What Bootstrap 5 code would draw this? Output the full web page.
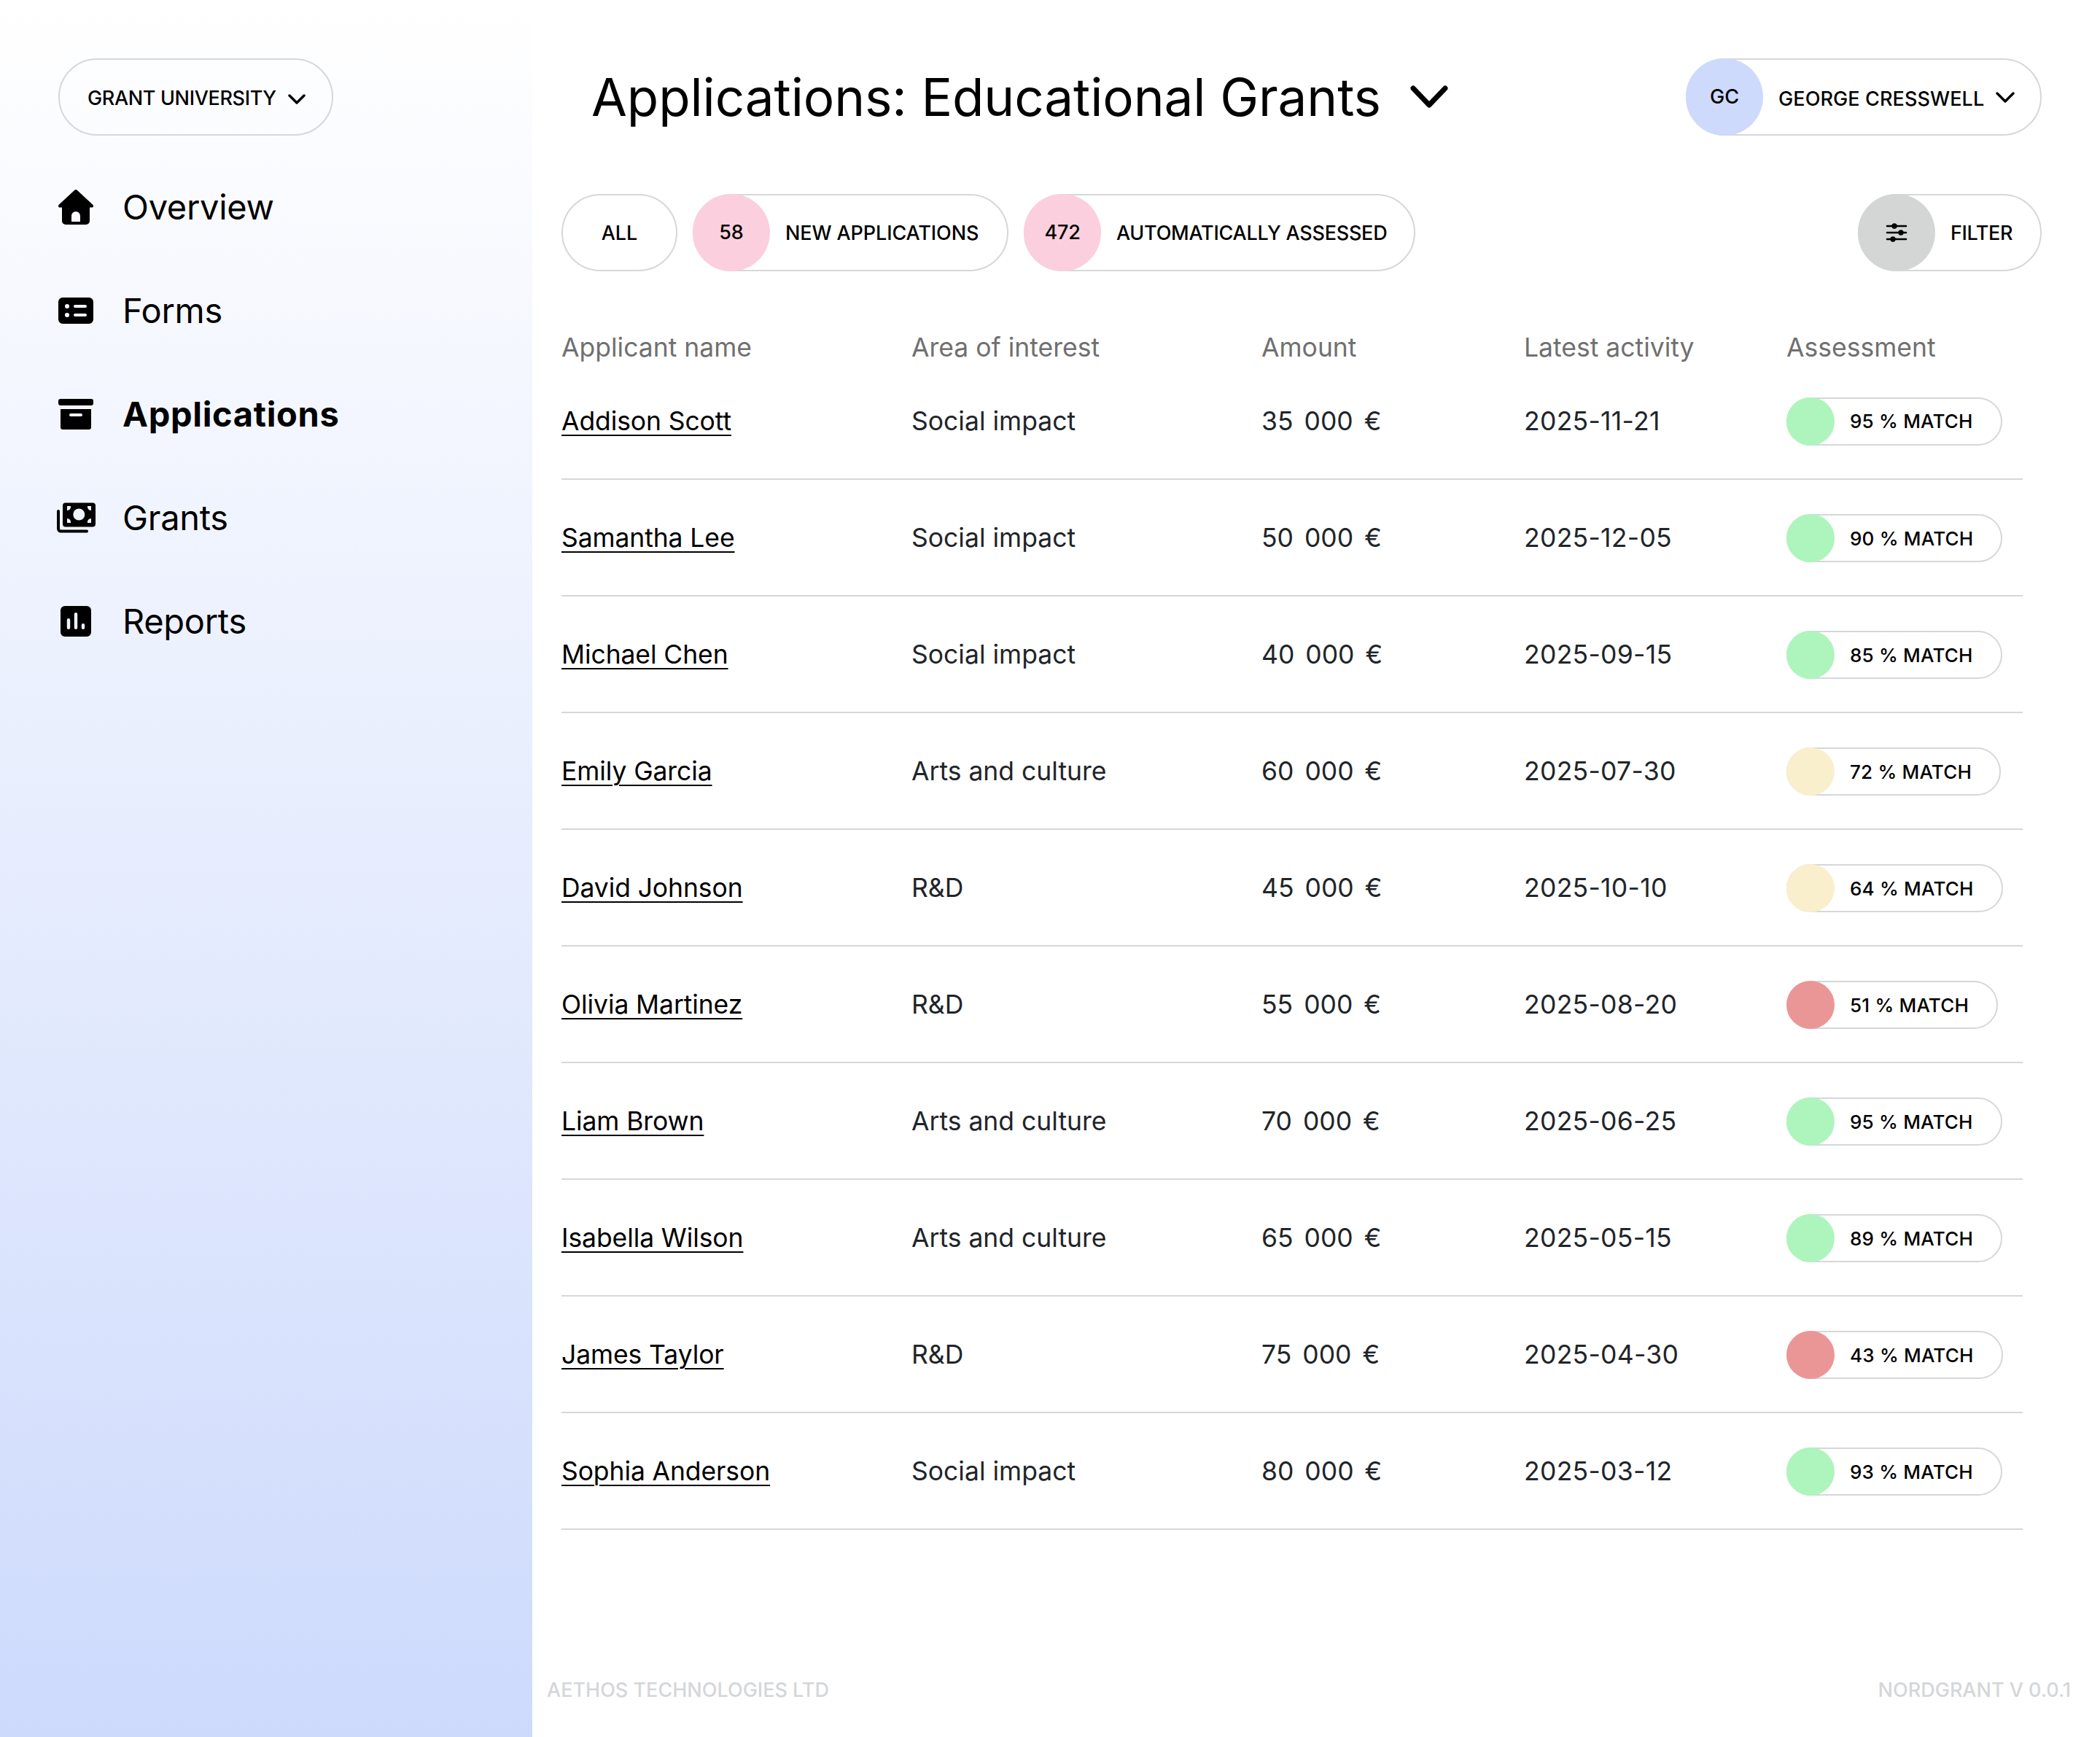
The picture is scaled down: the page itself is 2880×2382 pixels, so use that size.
<!doctype html>
<html lang="en">
<head>
<meta charset="utf-8">
<title>Applications: Educational Grants</title>
<link href="https://cdn.jsdelivr.net/npm/bootstrap@5.3.0/dist/css/bootstrap.min.css" rel="stylesheet">
<style>
html,body{height:100%}
body{font-family:Inter,"Noto Sans",sans-serif;color:#000;background:#fff;font-size:35.5px;min-height:2382px}
.shell{min-height:2382px}
.side{width:730px;flex:none;background:linear-gradient(180deg,#fff 0,#cddafc 100%);padding:80px 0 0 76px}
.main-area{min-width:0}
.chip{height:106px;border:2px solid #d5d7db;background:#fff;font-size:27px;font-weight:500;white-space:nowrap;color:#000;letter-spacing:-.1px}
.chip-dot{width:106px;height:106px;margin:-2px 0 -2px -2px;flex:none}
.chip-org{margin-left:4px;width:377px;padding-left:38px;padding-top:5px;background:transparent;letter-spacing:-.35px}
.nav-wrap{margin-top:27px}
.side .nav-link{height:142px;padding:0;color:#000;font-size:47px;display:flex;align-items:center;gap:36px;letter-spacing:-.3px}
.side .nav-link.active{font-weight:700;letter-spacing:.65px}
.top-bar{padding:80px 80px 0 81px}
.page-title{font-size:71px;font-weight:400;margin:0;letter-spacing:-.13px;line-height:106px}
.title-caret{margin-left:39px}
.filter-bar{padding:80px 80px 0 40px;gap:21px}
.chip-all{width:159px}
.chip-new{width:433px}
.chip-auto{width:537px;letter-spacing:-.25px}
.chip-filter{width:252px;letter-spacing:-.4px}
.chip-user{width:488px;letter-spacing:.1px}
.lbl,.dot-txt{padding-top:3px}
.chip-user .lbl{padding-top:6px}
.dot-pink{background:#fccfde}
.dot-blue{background:#cddafc}
.dot-gray{background:#d4d6d6}
.lbl{margin-left:21px}
.tbl-wrap{padding:81px 106px 0 40px}
.apps{table-layout:fixed;width:100%;margin:0;--bs-table-bg:transparent;font-size:35.5px}
.apps th{font-weight:400;color:#707070;padding:4px 0 0;height:44px;line-height:40px;border:0}
.apps td{padding:2px 0 0;height:160px;border-bottom:2px solid #d5d7db;vertical-align:middle}
.w-a{width:480px}.w-b{width:360px}
.apps a{color:#000;text-underline-offset:6px;text-decoration-thickness:2px;letter-spacing:-.1px}
.amt{word-spacing:5px}
.act{letter-spacing:.3px}
.match{height:66px;font-size:26px;letter-spacing:.2px;width:fit-content}
.match .chip-dot{width:66px;height:66px}
.hi{background:#adf5bc}.mid{background:#faefcc}.lo{background:#eb9696}
.m-lbl{margin:0 38px 0 21px}
.foot{padding:0 40px 47px 20px;color:#d4d6d9;font-size:27px;font-weight:500;line-height:34px}
</style>
</head>
<body>
<div class="shell d-flex">
  <aside class="side">
    <div class="chip chip-org rounded-pill d-inline-flex align-items-center gap-3">GRANT UNIVERSITY
      <svg width="24" height="14" viewBox="0 0 24 14" fill="none" stroke="#000" stroke-width="3.4" stroke-linecap="round" stroke-linejoin="round"><path d="M2 2l10 10L22 2"/></svg>
    </div>
    <nav class="nav flex-column nav-wrap">
      <a class="nav-link" href="#"><svg width="56" height="56" viewBox="0 0 56 56"><path fill-rule="evenodd" d="M26 5a3 3 0 0 1 4 0l21 19.500c2 2 1 4-1.500 4H47V47a5 5 0 0 1-5 5H14a5 5 0 0 1-5-5V28.500H6.500c-2.500 0-3.500-2-1.500-4zM22 48h12v-8a6 6 0 0 0-12 0z"/></svg>Overview</a>
      <a class="nav-link" href="#"><svg width="56" height="56" viewBox="0 0 56 56"><path fill-rule="evenodd" d="M10 10h36a6 6 0 0 1 6 6v24a6 6 0 0 1-6 6H10a6 6 0 0 1-6-6V16a6 6 0 0 1 6-6zM16 19a3 3 0 1 0 0 6 3 3 0 0 0 0-6zM16 31a3 3 0 1 0 0 6 3 3 0 0 0 0-6zM27 20a2 2 0 0 0 0 4h14a2 2 0 0 0 0-4zM27 32a2 2 0 0 0 0 4h14a2 2 0 0 0 0-4z"/></svg>Forms</a>
      <a class="nav-link active" href="#"><svg width="56" height="56" viewBox="0 0 56 56"><rect x="4" y="7" width="48" height="9" rx="3"/><path fill-rule="evenodd" d="M7 21h42v25a3 3 0 0 1-3 3H10a3 3 0 0 1-3-3zM21 27a2 2 0 0 0 0 4h14a2 2 0 0 0 0-4z"/></svg>Applications</a>
      <a class="nav-link" href="#"><svg width="56" height="56" viewBox="0 0 56 56"><path fill-rule="evenodd" d="M14 7.500h37a4 4 0 0 1 4 4v25a4 4 0 0 1-4 4H14a4 4 0 0 1-4-4v-25a4 4 0 0 1 4-4zM32.300 15.500a8 8 0 1 0 0 16 8 8 0 0 0 0-16zM16 12v6a5 5 0 0 0 5-6zM49 12h-5a5 5 0 0 0 5 6zM16 29v6h5a5 5 0 0 0-5-6zM49 29a5 5 0 0 0-5 6h5z"/><path fill="none" stroke="#000" stroke-width="4" stroke-linecap="round" d="M4 19v24a3.500 3.500 0 0 0 3.500 3.500H43"/></svg>Grants</a>
      <a class="nav-link" href="#"><svg width="56" height="56" viewBox="0 0 56 56"><path fill-rule="evenodd" d="M13 7h30a6 6 0 0 1 6 6v30a6 6 0 0 1-6 6H13a6 6 0 0 1-6-6V13a6 6 0 0 1 6-6zM18 24a2.200 2.200 0 0 0-2.200 2.200v10.600a2.200 2.200 0 0 0 4.400 0V26.200A2.200 2.200 0 0 0 18 24zM28 16a2.200 2.200 0 0 0-2.200 2.200v18.600a2.200 2.200 0 0 0 4.400 0V18.200A2.200 2.200 0 0 0 28 16zM38 31a2.200 2.200 0 0 0-2.200 2.200v3.600a2.200 2.200 0 0 0 4.400 0v-3.600A2.200 2.200 0 0 0 38 31z"/></svg>Reports</a>
    </nav>
  </aside>
  <main class="main-area flex-grow-1 d-flex flex-column">
    <header class="top-bar d-flex align-items-center justify-content-between">
      <div class="d-flex align-items-center">
        <h1 class="page-title">Applications: Educational Grants</h1>
        <svg class="title-caret" width="54" height="32" viewBox="0 0 54 32" fill="none" stroke="#000" stroke-width="7" stroke-linecap="round" stroke-linejoin="round"><path d="M5 4l22 23L49 4"/></svg>
      </div>
      <div class="chip chip-user rounded-pill d-flex align-items-center">
        <span class="chip-dot dot-blue rounded-circle d-flex align-items-center justify-content-center">GC</span>
        <span class="lbl">GEORGE CRESSWELL</span>
        <svg class="ms-3" width="26" height="15" viewBox="0 0 26 15" fill="none" stroke="#000" stroke-width="3.400" stroke-linecap="round" stroke-linejoin="round"><path d="M2 2l11 11L24 2"/></svg>
      </div>
    </header>
    <section class="filter-bar d-flex align-items-center">
      <div class="chip chip-all rounded-pill d-flex align-items-center justify-content-center"><span class="dot-txt">ALL</span></div>
      <div class="chip chip-new rounded-pill d-flex align-items-center"><span class="chip-dot dot-pink rounded-circle d-flex align-items-center justify-content-center">58</span><span class="lbl">NEW APPLICATIONS</span></div>
      <div class="chip chip-auto rounded-pill d-flex align-items-center"><span class="chip-dot dot-pink rounded-circle d-flex align-items-center justify-content-center">472</span><span class="lbl">AUTOMATICALLY ASSESSED</span></div>
      <div class="chip chip-filter rounded-pill d-flex align-items-center ms-auto">
        <span class="chip-dot dot-gray rounded-circle d-flex align-items-center justify-content-center">
          <svg width="30" height="28" viewBox="0 0 30 28" fill="#000" stroke="#000" stroke-width="2.600" stroke-linecap="round"><path d="M2 5h26M2 14h26M2 23h26" fill="none"/><circle cx="12" cy="5" r="2.400"/><circle cx="21" cy="14" r="2.400"/><circle cx="10" cy="23" r="2.400"/></svg>
        </span>
        <span class="lbl">FILTER</span>
      </div>
    </section>
    <div class="tbl-wrap">
      <table class="table table-borderless apps">
        <colgroup><col class="w-a"><col class="w-a"><col class="w-b"><col class="w-b"><col></colgroup>
        <thead><tr><th>Applicant name</th><th>Area of interest</th><th>Amount</th><th>Latest activity</th><th>Assessment</th></tr></thead>
        <tbody>
          <tr><td><a href="#">Addison Scott</a></td><td>Social impact</td><td class="amt">35 000 €</td><td class="act">2025-11-21</td><td><div class="chip match rounded-pill d-flex align-items-center"><span class="chip-dot hi rounded-circle"></span><span class="m-lbl">95 % MATCH</span></div></td></tr>
          <tr><td><a href="#">Samantha Lee</a></td><td>Social impact</td><td class="amt">50 000 €</td><td class="act">2025-12-05</td><td><div class="chip match rounded-pill d-flex align-items-center"><span class="chip-dot hi rounded-circle"></span><span class="m-lbl">90 % MATCH</span></div></td></tr>
          <tr><td><a href="#">Michael Chen</a></td><td>Social impact</td><td class="amt">40 000 €</td><td class="act">2025-09-15</td><td><div class="chip match rounded-pill d-flex align-items-center"><span class="chip-dot hi rounded-circle"></span><span class="m-lbl">85 % MATCH</span></div></td></tr>
          <tr><td><a href="#">Emily Garcia</a></td><td>Arts and culture</td><td class="amt">60 000 €</td><td class="act">2025-07-30</td><td><div class="chip match rounded-pill d-flex align-items-center"><span class="chip-dot mid rounded-circle"></span><span class="m-lbl">72 % MATCH</span></div></td></tr>
          <tr><td><a href="#">David Johnson</a></td><td>R&amp;D</td><td class="amt">45 000 €</td><td class="act">2025-10-10</td><td><div class="chip match rounded-pill d-flex align-items-center"><span class="chip-dot mid rounded-circle"></span><span class="m-lbl">64 % MATCH</span></div></td></tr>
          <tr><td><a href="#">Olivia Martinez</a></td><td>R&amp;D</td><td class="amt">55 000 €</td><td class="act">2025-08-20</td><td><div class="chip match rounded-pill d-flex align-items-center"><span class="chip-dot lo rounded-circle"></span><span class="m-lbl">51 % MATCH</span></div></td></tr>
          <tr><td><a href="#">Liam Brown</a></td><td>Arts and culture</td><td class="amt">70 000 €</td><td class="act">2025-06-25</td><td><div class="chip match rounded-pill d-flex align-items-center"><span class="chip-dot hi rounded-circle"></span><span class="m-lbl">95 % MATCH</span></div></td></tr>
          <tr><td><a href="#">Isabella Wilson</a></td><td>Arts and culture</td><td class="amt">65 000 €</td><td class="act">2025-05-15</td><td><div class="chip match rounded-pill d-flex align-items-center"><span class="chip-dot hi rounded-circle"></span><span class="m-lbl">89 % MATCH</span></div></td></tr>
          <tr><td><a href="#">James Taylor</a></td><td>R&amp;D</td><td class="amt">75 000 €</td><td class="act">2025-04-30</td><td><div class="chip match rounded-pill d-flex align-items-center"><span class="chip-dot lo rounded-circle"></span><span class="m-lbl">43 % MATCH</span></div></td></tr>
          <tr><td><a href="#">Sophia Anderson</a></td><td>Social impact</td><td class="amt">80 000 €</td><td class="act">2025-03-12</td><td><div class="chip match rounded-pill d-flex align-items-center"><span class="chip-dot hi rounded-circle"></span><span class="m-lbl">93 % MATCH</span></div></td></tr>
        </tbody>
      </table>
    </div>
    <footer class="foot mt-auto d-flex justify-content-between"><span>AETHOS TECHNOLOGIES LTD</span><span>NORDGRANT V 0.0.1</span></footer>
  </main>
</div>
<script src="https://cdn.jsdelivr.net/npm/bootstrap@5.3.0/dist/js/bootstrap.bundle.min.js"></script>
</body>
</html>
